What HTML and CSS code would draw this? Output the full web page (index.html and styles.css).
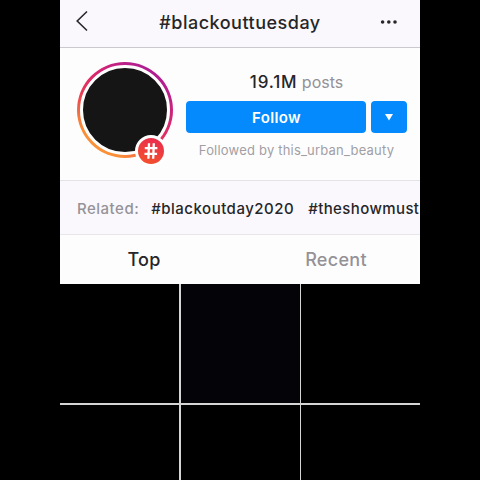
FILE: index.html
```html
<!DOCTYPE html>
<html lang="en">
<head>
  <meta charset="UTF-8" />
  <meta name="viewport" content="width=device-width, initial-scale=1.0"/>
  <title>#blackouttuesday</title>
  <link rel="stylesheet" href="styles.css">
</head>
<body>
  <div class="phone">
    <header class="topbar">
      <svg class="back" width="14" height="22" viewBox="0 0 14 22">
        <path d="M12 1.5 L2.2 11 L12 20.5" fill="none" stroke="#29292c" stroke-width="1.6"/>
      </svg>
      <h1 class="title">#blackouttuesday</h1>
      <svg class="more" width="18" height="6" viewBox="0 0 18 6" fill="#262626">
        <circle cx="2.6" cy="3" r="1.8"/>
        <circle cx="8.8" cy="3" r="1.8"/>
        <circle cx="15" cy="3" r="1.8"/>
      </svg>
    </header>

    <section class="profile">
      <div class="avatar">
        <div class="photo"></div>
        <div class="badge">
          <svg width="14" height="18" viewBox="0 0 14 18" fill="none" stroke="#fff" stroke-width="2.3">
            <path d="M5 1.2 L4.4 16.8 M9.8 1.2 L9.2 16.8 M.8 6.2 H13.4 M.5 11.8 H13.1"/>
          </svg>
        </div>
      </div>
      <div class="info">
        <p class="posts"><strong>19.1M</strong> posts</p>
        <div class="actions">
          <button class="follow">Follow</button>
          <button class="dropdown">
            <svg width="8" height="7" viewBox="0 0 8 7"><path d="M0 0 H8 L4 6.6 Z" fill="#fff"/></svg>
          </button>
        </div>
        <p class="followed">Followed by this_urban_beauty</p>
      </div>
    </section>

    <div class="related">
      <span class="label">Related:</span>
      <span class="tag">#blackoutday2020</span>
      <span class="tag last">#theshowmust</span>
    </div>

    <nav class="tabs">
      <span class="tab active">Top</span>
      <span class="tab">Recent</span>
    </nav>

    <div class="grid">
      <div class="cell"></div>
      <div class="cell dim"></div>
      <div class="cell"></div>
      <div class="cell"></div>
      <div class="cell"></div>
      <div class="cell"></div>
    </div>
  </div>
</body>
</html>
```

FILE: styles.css
```css
* {
  box-sizing: border-box;
}

body {
  margin: 0;
  background: #000;
  font-family: Inter, "Liberation Sans", sans-serif;
  color: #262629;
  overflow: hidden;
}

.phone {
  width: 360px;
  height: 480px;
  margin: 0 auto;
  background: #fefdfe;
  overflow: hidden;
}

.topbar {
  display: flex;
  align-items: center;
  justify-content: space-between;
  height: 48px;
  padding: 0 22px 6px 15px;
  background: #faf8fc;
  border-bottom: 1px solid #ccc9ce;
}

.title {
  margin: 0 0 0 11px;
  padding-top: 4px;
  font-size: 18px;
  font-weight: 500;
  line-height: 24px;
  letter-spacing: 0.5px;
}

.more {
  margin-top: 2px;
}

.profile {
  display: flex;
  height: 132px;
  padding: 14px 13px 0 17px;
}

.avatar {
  position: relative;
  width: 96px;
  height: 96px;
  padding: 3px;
  border-radius: 50%;
  background: linear-gradient(215deg, #a81c99 10%, #d9256f 40%, #e73a55 58%, #fa8d38 80%, #fba043 100%);
}

.photo {
  width: 90px;
  height: 90px;
  border: 3px solid #fff;
  border-radius: 50%;
  background: #151515;
}

.badge {
  position: absolute;
  left: 58px;
  top: 73px;
  display: flex;
  align-items: center;
  justify-content: center;
  width: 32px;
  height: 32px;
  border: 3px solid #fff;
  border-radius: 50%;
  background: linear-gradient(200deg, #e92951, #f4542a);
}

.info {
  width: 221px;
  margin-left: 13px;
  text-align: center;
}

.posts {
  margin: 9px 0 8px;
  font-size: 16px;
  line-height: 22px;
  color: #939196;
}

.posts strong {
  font-size: 17px;
  font-weight: 500;
  letter-spacing: 0.8px;
  color: #262629;
}

.actions {
  display: flex;
  gap: 5px;
}

.follow,
.dropdown {
  height: 32px;
  padding: 0;
  border: none;
  border-radius: 4px;
  background: #058afe;
  color: #fff;
  font: 600 15px Inter, sans-serif;
}

.follow {
  width: 180px;
  padding-left: 1px;
  letter-spacing: 0.4px;
}

.dropdown {
  display: flex;
  align-items: center;
  justify-content: center;
  width: 36px;
}

.followed {
  margin: 7px 0 0;
  font-size: 13px;
  line-height: 20px;
  letter-spacing: 0.2px;
  color: #a19fa4;
}

.related {
  display: flex;
  align-items: center;
  height: 55px;
  padding: 1px 0 0 17px;
  background: #faf8fc;
  border-top: 1px solid #e4e2e6;
  border-bottom: 1px solid #e8e6ea;
  font-size: 15px;
  font-weight: 500;
  letter-spacing: 0.5px;
  white-space: nowrap;
}

.label {
  margin-right: 12px;
  color: #959398;
}

.tag {
  margin-right: 14px;
}

.tag.last {
  margin-right: 0;
  letter-spacing: 0.4px;
}

.tabs {
  display: flex;
  height: 49px;
}

.tab {
  flex: 1;
  padding-left: 12px;
  font-size: 18px;
  font-weight: 500;
  line-height: 49px;
  letter-spacing: 0.3px;
  text-align: center;
  color: #949297;
}

.tab.active {
  padding: 0 12px 0 0;
  color: #262629;
}

.grid {
  display: grid;
  grid-template-columns: 119px 119px 119px;
  grid-auto-rows: 119px;
  gap: 1.5px;
  background: #d5d5d5;
}

.cell {
  background: #000;
}

.dim {
  background: #040408;
}
```
